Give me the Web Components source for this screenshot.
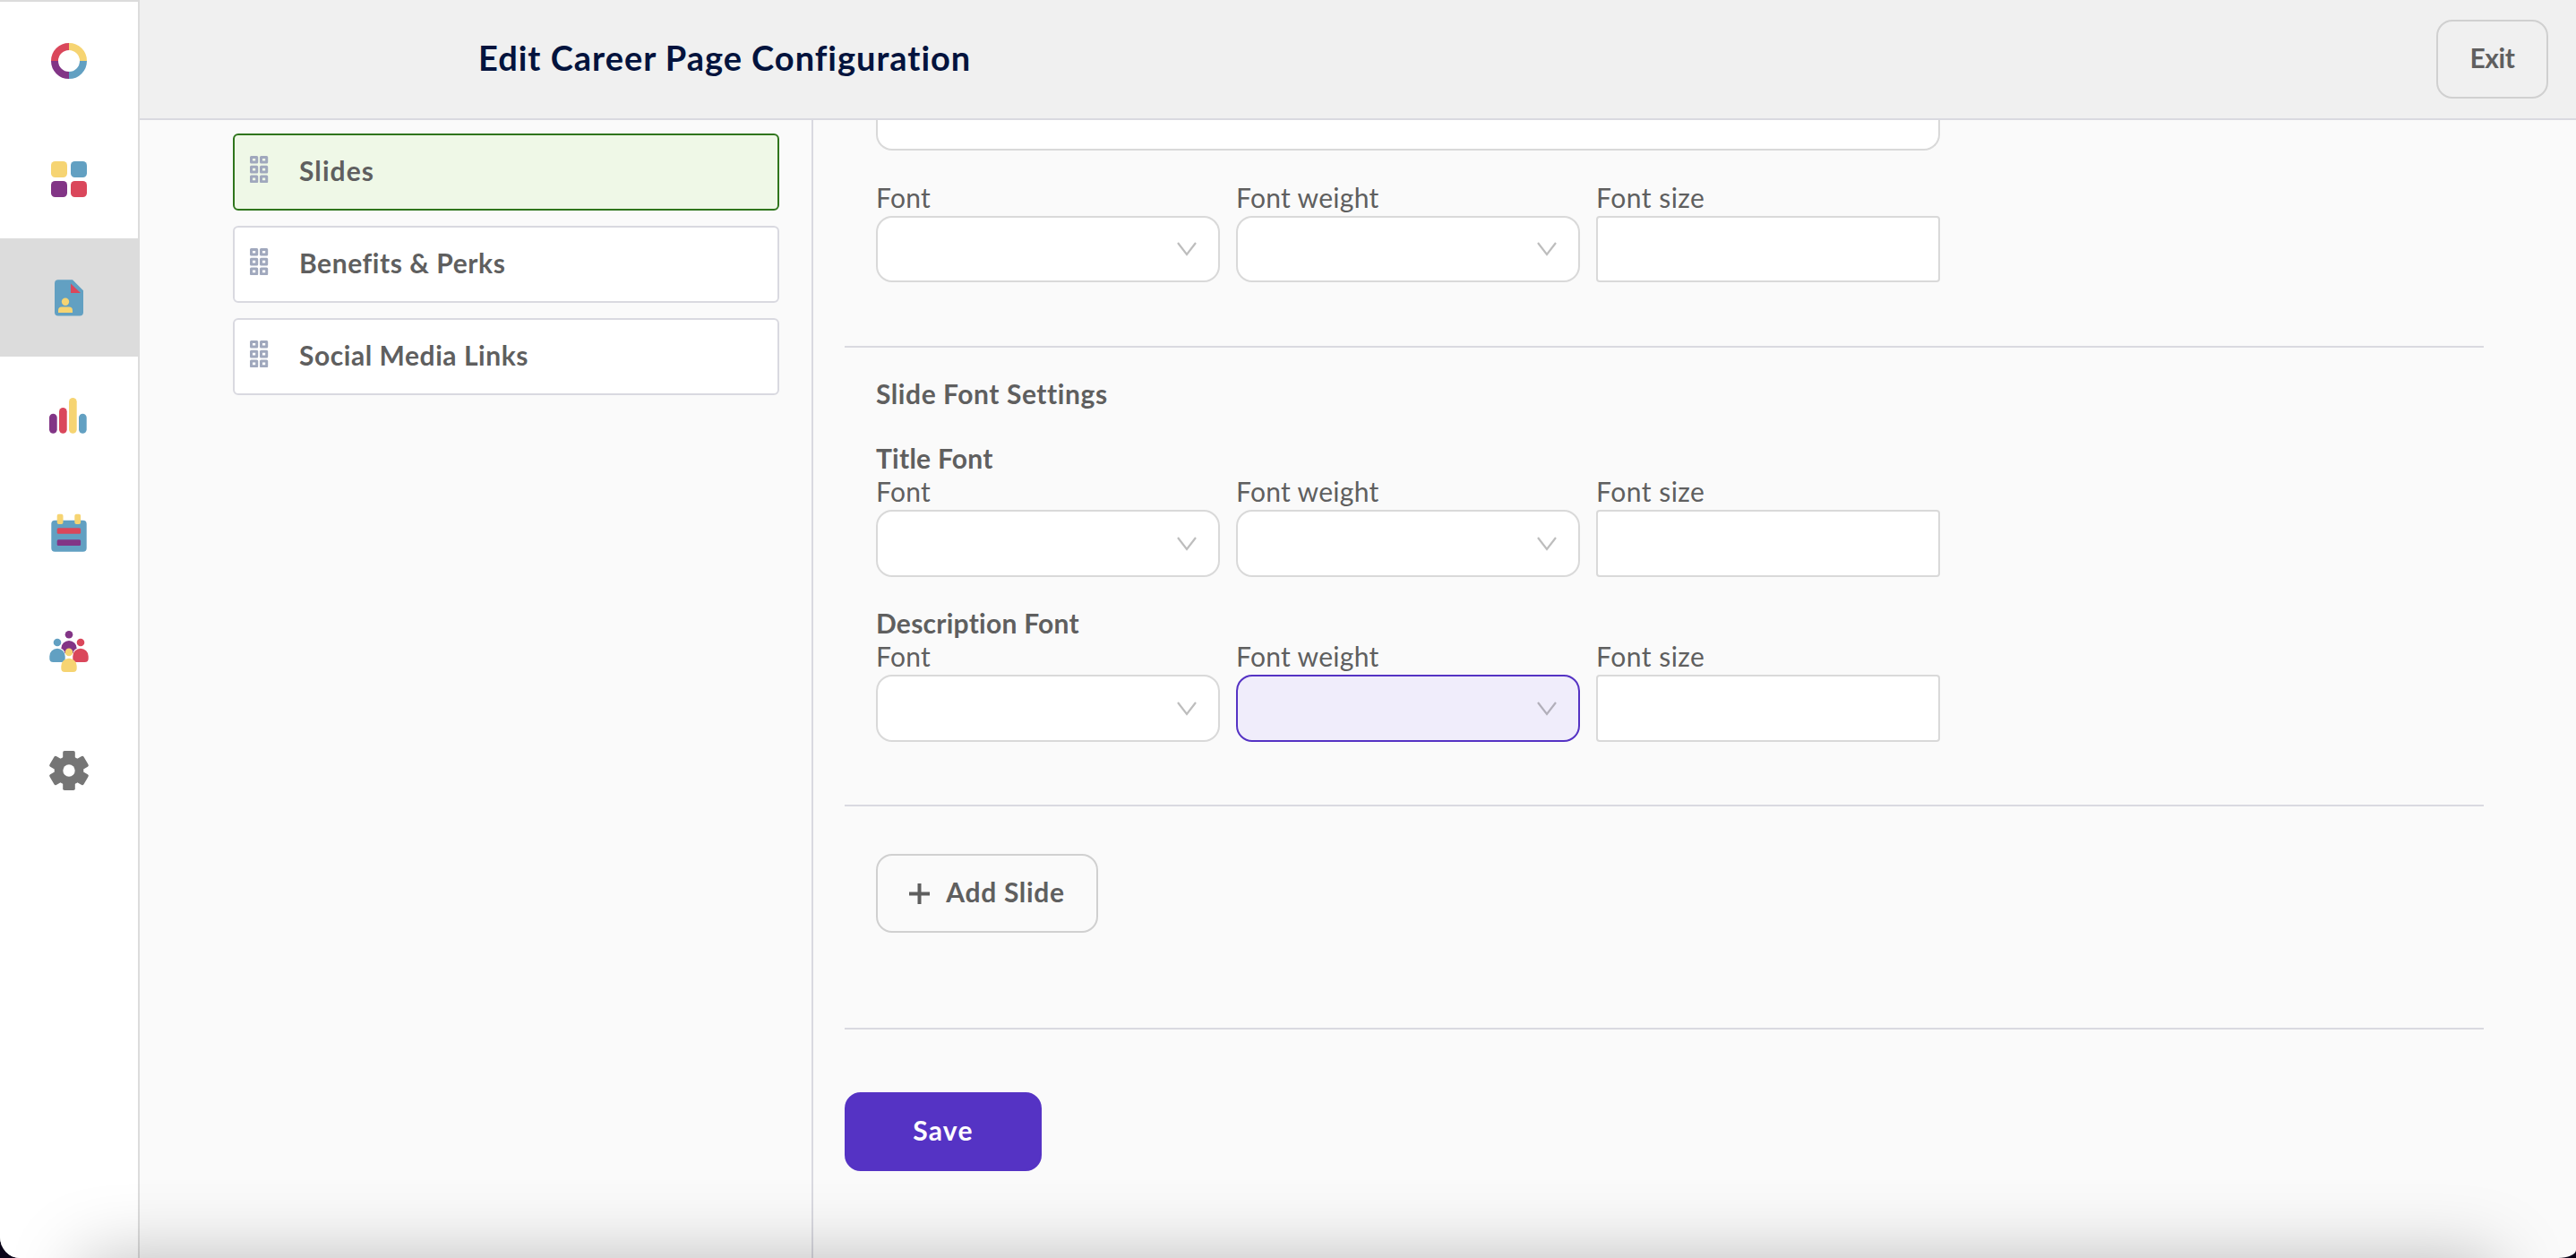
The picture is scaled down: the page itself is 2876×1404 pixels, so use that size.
<!DOCTYPE html>
<html lang="en">
<head>
    <meta charset="utf-8">
    <title>Edit Career Page Configuration</title>
    <style>
        html, body {
            margin: 0;
            height: 100%;
            overflow: hidden;
            background: #0a0418;
        }

        body {
            --line: #d9d9e0;
            --field-line: #d9d9d9;
            --primary: #5533c4;
            color: #5f5f5f;
            font-family: Lato, 'Open Sans', sans-serif;
            font-size: 30px;
            line-height: 36px;
        }
    </style>
</head>
<body>
    <career-app></career-app>

    <script>
        const icons = {
            logo: `
                <g fill="none" stroke-width="8">
                    <path stroke="#f6d472" d="M24 8a16 16 0 0 1 16 16"/>
                    <path stroke="#62a0c2" d="M40 24a16 16 0 0 1-16 16"/>
                    <path stroke="#823586" d="M24 40a16 16 0 0 1-16-16"/>
                    <path stroke="#da475b" d="M8 24a16 16 0 0 1 16-16"/>
                </g>`,
            dashboard: `
                <rect x="4" y="4" width="18" height="18" rx="4.5" fill="#f6d472"/>
                <rect x="26" y="4" width="18" height="18" rx="4.5" fill="#62a0c2"/>
                <rect x="4" y="26" width="18" height="18" rx="4.5" fill="#823586"/>
                <rect x="26" y="26" width="18" height="18" rx="4.5" fill="#da475b"/>`,
            candidate: `
                <path fill="#62a0c2" d="M12 4.300h16l12 12v24.200a4 4 0 0 1-4 4H12a4 4 0 0 1-4-4V8.300a4 4 0 0 1 4-4z"/>
                <path fill="#da475b" d="M26 8.500v10.500h11z"/>
                <circle cx="20" cy="28.700" r="4.200" fill="#f6d472"/>
                <path fill="#f6d472" d="M12 41v-2.500a4 4 0 0 1 4-4h8a4 4 0 0 1 4 4V41z"/>`,
            reports: `
                <rect x="2" y="21.700" width="8.700" height="22" rx="4.350" fill="#823586"/>
                <rect x="13" y="15" width="8.700" height="28.700" rx="4.350" fill="#da475b"/>
                <rect x="24" y="4" width="8.700" height="39.700" rx="4.350" fill="#f6d472"/>
                <rect x="35" y="21.700" width="8.700" height="22" rx="4.350" fill="#62a0c2"/>`,
            calendar: `
                <rect x="4.300" y="8.700" width="39.400" height="35" rx="4" fill="#62a0c2"/>
                <rect x="10.700" y="1.700" width="6.800" height="11.300" rx="2" fill="#f6d472"/>
                <rect x="30.300" y="1.700" width="6.800" height="11.300" rx="2" fill="#f6d472"/>
                <rect x="10.700" y="17.300" width="26.400" height="6.500" rx="1.500" fill="#da475b"/>
                <rect x="10.700" y="30.300" width="26.400" height="6.700" rx="1.500" fill="#823586"/>`,
            team: `
                <circle cx="24" cy="4.300" r="4.300" fill="#823586"/>
                <path fill="#823586" d="M15.300 19.700a8.700 8.700 0 0 1 17.400 0q-4 2-4 5.300h-9.400q0-3.300-4-5.300z"/>
                <circle cx="11" cy="13" r="4.300" fill="#62a0c2"/>
                <path fill="#62a0c2" d="M2.300 28.400a8.700 8.700 0 0 1 17.400 0V31a4 4 0 0 1-4 4H6.300a4 4 0 0 1-4-4z"/>
                <circle cx="37" cy="13" r="4.300" fill="#da475b"/>
                <path fill="#da475b" d="M28.300 28.400a8.700 8.700 0 0 1 17.400 0V31a4 4 0 0 1-4 4h-9.400a4 4 0 0 1-4-4z"/>
                <circle cx="24" cy="23.900" r="4.300" fill="#f6d472"/>
                <path fill="#f6d472" d="M15.300 39.400a8.700 8.700 0 0 1 17.400 0V42a4 4 0 0 1-4 4h-9.400a4 4 0 0 1-4-4z"/>`,
            settings: `
                <g fill="#757575">
                    <circle cx="24" cy="24" r="16.300"/>
                    <rect id="t" x="17.200" y="2" width="13.600" height="44" rx="1.800"/>
                    <use href="#t" transform="rotate(60 24 24)"/>
                    <use href="#t" transform="rotate(120 24 24)"/>
                </g>
                <circle cx="24" cy="24" r="6.700" fill="#fff"/>`
        };

        class AppIcon extends HTMLElement {
            connectedCallback() {
                this.attachShadow({ mode: 'open' });
                this.shadowRoot.innerHTML = `
                    <style>
                        :host { display: block; width: 48px; height: 48px; }
                        svg { display: block; overflow: visible; }
                    </style>
                    <svg width="48" height="48" viewBox="0 0 48 48">${icons[this.getAttribute('name')]}</svg>
                `;
            }
        }

        class SideBar extends HTMLElement {
            connectedCallback() {
                const names = ['logo', 'dashboard', 'candidate', 'reports', 'calendar', 'team', 'settings'];
                this.attachShadow({ mode: 'open' });
                this.shadowRoot.innerHTML = `
                    <style>
                        :host {
                            display: block;
                            box-sizing: border-box;
                            width: 156px;
                            background: #fff;
                            border-top: 2px solid #dcdcdc;
                            border-right: 2px solid #dcdcdc;
                        }
                        a {
                            display: flex;
                            align-items: center;
                            justify-content: center;
                            height: 132px;
                        }
                        a.active { background: #dcdcdc; }
                    </style>
                    ${names.map(n => `<a class="${n === 'candidate' ? 'active' : ''}"><app-icon name="${n}"></app-icon></a>`).join('')}
                `;
            }
        }

        class AppButton extends HTMLElement {
            connectedCallback() {
                this.attachShadow({ mode: 'open' });
                this.shadowRoot.innerHTML = `
                    <style>
                        :host {
                            display: inline-flex;
                            align-items: center;
                            justify-content: center;
                            gap: 18px;
                            box-sizing: border-box;
                            height: 88px;
                            padding-bottom: 4px;
                            border: 2px solid #d0d0d0;
                            border-radius: 18px;
                            font-weight: 700;
                        }
                        :host([primary]) {
                            border-color: var(--primary);
                            background: var(--primary);
                            color: #fff;
                        }
                    </style>
                    <slot name="icon"></slot>
                    <span><slot></slot></span>
                `;
            }
        }

        class PageHeader extends HTMLElement {
            connectedCallback() {
                this.attachShadow({ mode: 'open' });
                this.shadowRoot.innerHTML = `
                    <style>
                        :host {
                            display: flex;
                            align-items: center;
                            justify-content: space-between;
                            box-sizing: border-box;
                            height: 134px;
                            padding: 0 31px 0 378px;
                            background: #f0f0f0;
                            border-bottom: 2px solid var(--line);
                        }
                        h1 {
                            margin: 0 0 4px;
                            color: #03133d;
                            font-size: 38px;
                            font-weight: 700;
                            line-height: 46px;
                            letter-spacing: 0.98px;
                        }
                        app-button { width: 125px; letter-spacing: -0.4px; }
                    </style>
                    <h1><slot></slot></h1>
                    <app-button>Exit</app-button>
                `;
            }
        }

        class SectionCard extends HTMLElement {
            connectedCallback() {
                const cells = [0, 1, 2].map(r => [0, 1].map(c =>
                    `<rect x="${1.5 + c * 11}" y="${1.5 + r * 10.8}" width="6.2" height="5.6"/>`).join('')).join('');
                this.attachShadow({ mode: 'open' });
                this.shadowRoot.innerHTML = `
                    <style>
                        :host {
                            display: flex;
                            align-items: center;
                            gap: 34px;
                            box-sizing: border-box;
                            height: 86px;
                            padding: 0 17px;
                            background: #fff;
                            border: 2px solid var(--line);
                            border-radius: 6px;
                            font-weight: 700;
                            letter-spacing: 0.55px;
                        }
                        :host([active]) {
                            background: #eff8e7;
                            border-color: #2f751c;
                            letter-spacing: 1.1px;
                        }
                        svg { margin-bottom: 6px; }
                        span { margin-bottom: 4px; }
                    </style>
                    <svg width="21" height="30" fill="none" stroke="#a0a8bd" stroke-width="3" stroke-linejoin="round">${cells}</svg>
                    <span><slot></slot></span>
                `;
            }
        }

        class SelectField extends HTMLElement {
            connectedCallback() {
                const chevron = this.hasAttribute('plain') ? '' : `
                    <svg width="22" height="16" fill="none" stroke="#000" stroke-opacity=".26" stroke-width="2.2">
                        <path d="M1 1l10 13L21 1"/>
                    </svg>`;
                this.attachShadow({ mode: 'open' });
                this.shadowRoot.innerHTML = `
                    <style>
                        :host { display: block; }
                        label {
                            display: block;
                            margin-bottom: 3px;
                            letter-spacing: 0.3px;
                        }
                        .control {
                            display: flex;
                            align-items: center;
                            justify-content: flex-end;
                            box-sizing: border-box;
                            height: var(--field-height, 74px);
                            padding-right: 24px;
                            background: #fff;
                            border: 2px solid var(--field-line);
                            border-radius: 18px;
                        }
                        :host([plain]) .control { border-radius: 4px; }
                        :host([plain]) label { letter-spacing: 0.5px; }
                        :host([focused]) .control {
                            background: #f0edfb;
                            border-color: var(--primary);
                        }
                    </style>
                    <label>${this.getAttribute('label')}</label>
                    <div class="control">${chevron}</div>
                `;
            }
        }

        class FontRow extends HTMLElement {
            connectedCallback() {
                this.attachShadow({ mode: 'open' });
                this.shadowRoot.innerHTML = `
                    <style>
                        :host { display: block; }
                        .fields {
                            display: grid;
                            grid-template-columns: repeat(3, 384px);
                            gap: 18px;
                        }
                        ::slotted(h3) {
                            margin: 0 0 1px;
                            font-size: 30px;
                            font-weight: 700;
                            letter-spacing: 0.25px;
                        }
                    </style>
                    <slot></slot>
                    <div class="fields">
                        <select-field label="Font"></select-field>
                        <select-field label="Font weight" ${this.hasAttribute('focused') ? 'focused' : ''}></select-field>
                        <select-field label="Font size" plain></select-field>
                    </div>
                `;
            }
        }

        class SlideForm extends HTMLElement {
            connectedCallback() {
                this.attachShadow({ mode: 'open' });
                this.shadowRoot.innerHTML = `
                    <style>
                        :host {
                            display: block;
                            padding: 0 103px 0 35px;
                        }
                        section {
                            padding: 0 35px;
                            border-bottom: 2px solid var(--line);
                        }
                        .textarea {
                            box-sizing: border-box;
                            width: 1188px;
                            height: 34px;
                            margin-bottom: 34px;
                            background: #fff;
                            border: 2px solid var(--field-line);
                            border-top: 0;
                            border-radius: 0 0 18px 18px;
                        }
                        .intro { padding-bottom: 71px; }
                        .fonts {
                            --field-height: 75px;
                            padding-top: 33px;
                            padding-bottom: 70px;
                        }
                        .add { display: flex; padding-top: 53px; padding-bottom: 106px; }
                        h2 {
                            margin: 0 0 36px;
                            font-size: 30px;
                            font-weight: 700;
                            letter-spacing: 0.57px;
                        }
                        font-row + font-row { margin-top: 33px; }
                        .add app-button { width: 248px; letter-spacing: 0.7px; }
                        .save { width: 220px; margin-top: 70px; letter-spacing: 1.2px; }
                    </style>
                    <section class="intro">
                        <div class="textarea"></div>
                        <font-row></font-row>
                    </section>
                    <section class="fonts">
                        <h2>Slide Font Settings</h2>
                        <font-row><h3>Title Font</h3></font-row>
                        <font-row focused><h3>Description Font</h3></font-row>
                    </section>
                    <section class="add">
                        <app-button>
                            <svg slot="icon" width="23" height="23" style="margin-top:5px" stroke="#5f5f5f" stroke-width="4">
                                <path d="M11.500 0v23M0 11.500h23"/>
                            </svg>Add Slide</app-button>
                    </section>
                    <app-button class="save" primary>Save</app-button>
                `;
            }
        }

        class CareerApp extends HTMLElement {
            connectedCallback() {
                this.attachShadow({ mode: 'open' });
                this.shadowRoot.innerHTML = `
                    <style>
                        :host {
                            display: grid;
                            grid-template-columns: 156px 1fr;
                            position: relative;
                            height: 100vh;
                            overflow: hidden;
                            background: #fafafa;
                            border-radius: 0 0 20px 22px / 0 0 9px 24px;
                        }
                        .body {
                            display: grid;
                            grid-template-columns: 752px 1fr;
                            height: calc(100vh - 134px);
                        }
                        nav {
                            display: flex;
                            flex-direction: column;
                            gap: 17px;
                            padding: 15px 36px 0 104px;
                            border-right: 2px solid var(--line);
                        }
                        /* soft shade along the bottom edge of the window */
                        .shade {
                            position: absolute;
                            top: 100%;
                            left: 90px;
                            right: 90px;
                            height: 120px;
                            box-shadow: 0 0 80px rgba(0, 0, 0, 0.25);
                            pointer-events: none;
                        }
                    </style>
                    <side-bar></side-bar>
                    <main>
                        <page-header>Edit Career Page Configuration</page-header>
                        <div class="body">
                            <nav>
                                <section-card active>Slides</section-card>
                                <section-card>Benefits &amp; Perks</section-card>
                                <section-card>Social Media Links</section-card>
                            </nav>
                            <slide-form></slide-form>
                        </div>
                    </main>
                    <div class="shade"></div>
                `;
            }
        }

        customElements.define('app-icon', AppIcon);
        customElements.define('side-bar', SideBar);
        customElements.define('app-button', AppButton);
        customElements.define('page-header', PageHeader);
        customElements.define('section-card', SectionCard);
        customElements.define('select-field', SelectField);
        customElements.define('font-row', FontRow);
        customElements.define('slide-form', SlideForm);
        customElements.define('career-app', CareerApp);
    </script>
</body>
</html>
